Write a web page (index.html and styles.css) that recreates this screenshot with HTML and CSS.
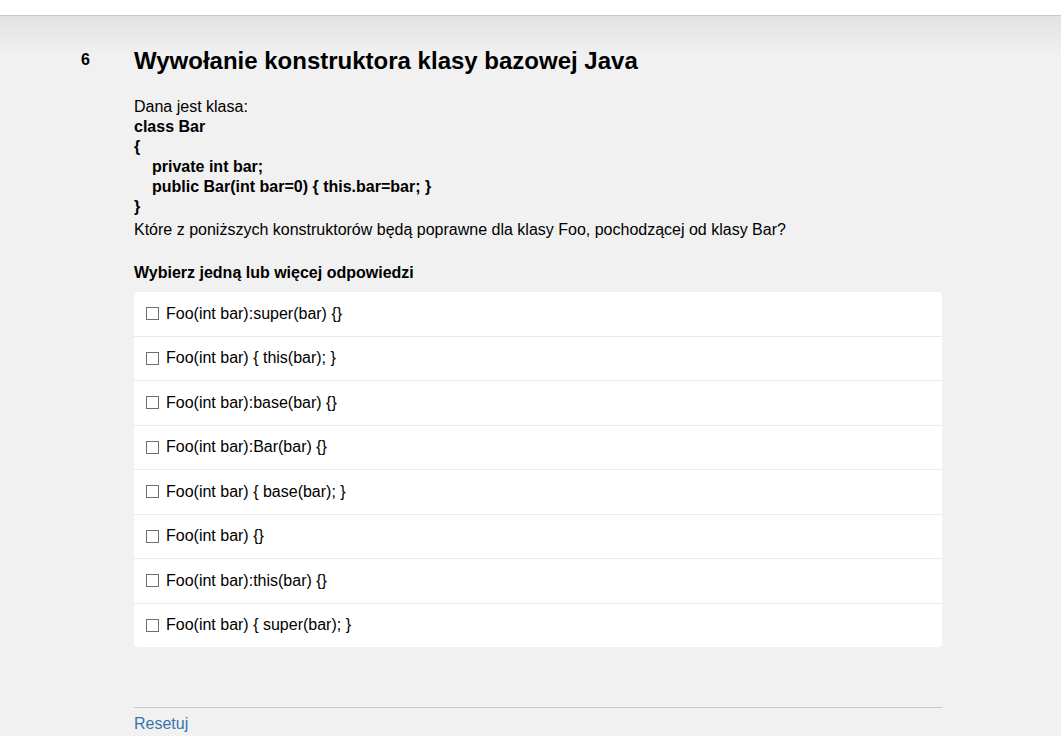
FILE: index.html
```html
<!DOCTYPE html>
<html lang="pl">
<head>
<meta charset="utf-8">
<title>Wywołanie konstruktora klasy bazowej Java</title>
<link rel="stylesheet" href="styles.css">
</head>
<body>
<header class="topbar"></header>
<div class="shade"></div>
<main class="question">
  <div class="qnum">6</div>
  <div class="qbody">
    <h1 class="qtitle">Wywołanie konstruktora klasy bazowej Java</h1>
    <div class="qtext">
      <div>Dana jest klasa:</div>
      <div class="code">class Bar</div>
      <div class="code">{</div>
      <div class="code indent">private int bar;</div>
      <div class="code indent">public Bar(int bar=0) { this.bar=bar; }</div>
      <div class="code">}</div>
      <div class="ask">Które z poniższych konstruktorów będą poprawne dla klasy Foo, pochodzącej od klasy Bar?</div>
    </div>
    <h2 class="prompt">Wybierz jedną lub więcej odpowiedzi</h2>
    <ul class="answers">
      <li class="answer"><span class="box"></span>Foo(int bar):super(bar) {}</li>
      <li class="answer"><span class="box"></span>Foo(int bar) { this(bar); }</li>
      <li class="answer"><span class="box"></span>Foo(int bar):base(bar) {}</li>
      <li class="answer"><span class="box"></span>Foo(int bar):Bar(bar) {}</li>
      <li class="answer"><span class="box"></span>Foo(int bar) { base(bar); }</li>
      <li class="answer"><span class="box"></span>Foo(int bar) {}</li>
      <li class="answer"><span class="box"></span>Foo(int bar):this(bar) {}</li>
      <li class="answer"><span class="box"></span>Foo(int bar) { super(bar); }</li>
    </ul>
    <div class="footer">
      <a class="reset" href="#">Resetuj</a>
    </div>
  </div>
</main>
</body>
</html>
```
FILE: styles.css
```css
html, body {
  margin: 0;
  padding: 0;
}
body {
  background: #f1f1f1;
  font-family: "Liberation Sans", Arial, sans-serif;
  font-size: 16px;
  color: #000;
  overflow: hidden;
}
.topbar {
  height: 15px;
  background: #fff;
  border-bottom: 1px solid #c8c8c8;
}
.shade {
  height: 40px;
  background: linear-gradient(#e2e2e2, #f1f1f1);
}
.question {
  display: flex;
  padding-left: 81px;
  margin-top: -6px;
}
.qnum {
  width: 53px;
  font-weight: bold;
  font-size: 16px;
  line-height: 20px;
}
.qbody {
  width: 808px;
}
.qtitle {
  margin: 0;
  font-size: 24px;
  line-height: 30px;
  font-weight: bold;
  margin-top: -4px;
}
.qtext {
  margin-top: 21px;
  line-height: 20px;
}
.code {
  font-weight: bold;
}
.indent {
  padding-left: 18px;
}
.ask {
  margin-top: 3px;
}
.prompt {
  margin: 23px 0 0;
  font-size: 16px;
  line-height: 20px;
  font-weight: bold;
}
.answers {
  list-style: none;
  margin: 9px 0 0;
  padding: 0;
  background: #fff;
  border-radius: 4px;
}
.answer {
  display: flex;
  align-items: center;
  padding: 11.75px 12px;
  line-height: 20px;
  border-top: 1px solid #ebebeb;
}
.answer:first-child {
  border-top: none;
}
.box {
  width: 11px;
  height: 11px;
  border: 1px solid #6f6f6f;
  margin-right: 7px;
  flex: none;
}
.footer {
  margin-top: 60px;
  border-top: 1px solid #c8c8c8;
  padding-top: 6px;
  line-height: 20px;
}
.reset {
  color: #3a73ad;
  text-decoration: none;
}
```
